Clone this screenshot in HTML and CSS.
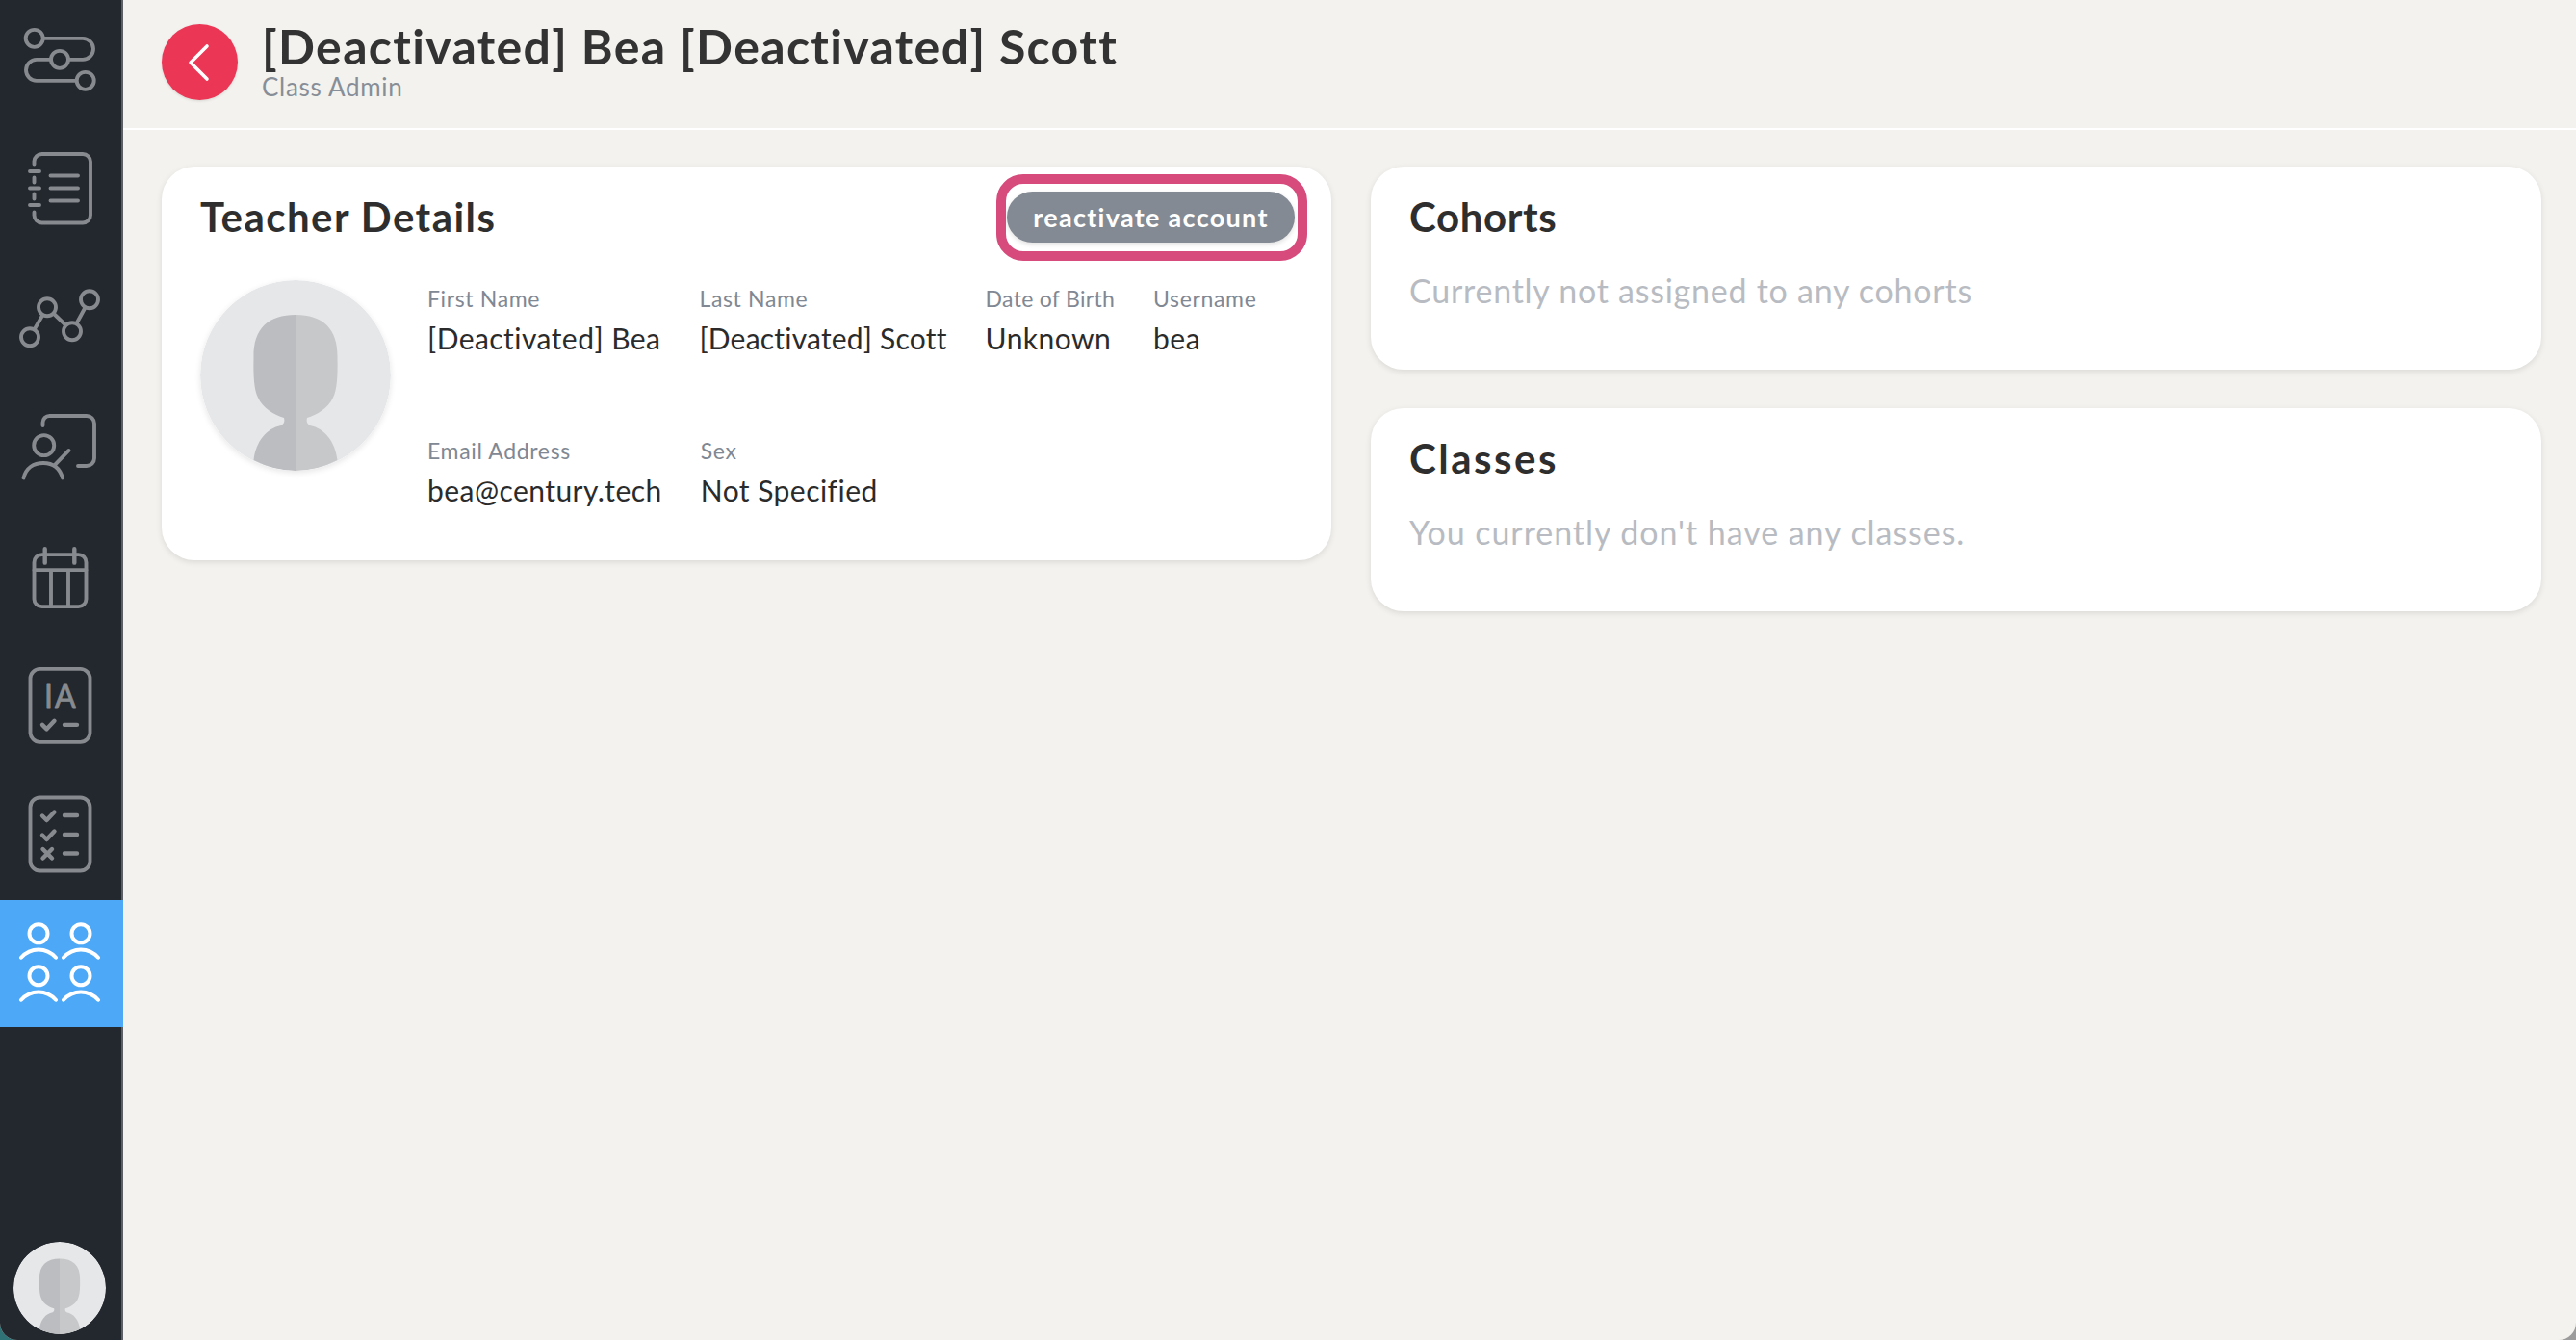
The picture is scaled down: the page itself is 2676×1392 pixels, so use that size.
FILE: index.html
```html
<!DOCTYPE html>
<html lang="en">
<head>
<meta charset="utf-8">
<title>Teacher Details</title>
<link rel="stylesheet" href="styles.css">
</head>
<body>
<svg class="defs" width="0" height="0" aria-hidden="true">
  <symbol id="silhouette" viewBox="0 0 198 198">
    <circle cx="99" cy="99" r="99" fill="#e6e7e9"/>
    <path fill="#bcbdc0" d="M99 36C71 36 55 50 55.5 80C55 100 56 114 60 122C65 133 77 140 87 143C88 147 87 149 84 151C69 154 58 167 55.5 187A99 99 0 0 0 99 198Z"/>
    <path fill="#c7c8ca" d="M99 36C127 36 143 50 142.5 80C143 100 142 114 138 122C133 133 121 140 111 143C110 147 111 149 114 151C129 154 140 167 142.5 187A99 99 0 0 1 99 198Z"/>
  </symbol>
</svg>
<div class="app">
  <aside class="sidebar">
    <nav class="nav">
      <a class="nav-item">
        <svg class="nav-icon" viewBox="13 11.15 100 100"><path d="M45 40H86A11 11 0 0 1 86 62H71M53 62H38A11 11 0 0 0 38 84H80"/><circle cx="35.7" cy="40" r="9"/><circle cx="62" cy="62" r="9"/><circle cx="88.7" cy="84" r="9"/></svg>
      </a>
      <a class="nav-item">
        <svg class="nav-icon" viewBox="13 145.45 100 100"><path d="M35.5 171V168A8 8 0 0 1 43.5 160.5H86A8 8 0 0 1 94 168.5V224A8 8 0 0 1 86 232H43.5A8 8 0 0 1 35.5 224V221M31 178.5H41M31 196H41M31 213.5H41M35.5 185V190M35.5 202V207M52.5 183H81M52.5 196H81M52.5 209H81"/></svg>
      </a>
      <a class="nav-item">
        <svg class="nav-icon" viewBox="13 279.75 100 100"><path d="M31 350L49 319L75 344L93 311"/><circle cx="31" cy="350" r="9"/><circle cx="49" cy="319" r="9"/><circle cx="75" cy="344" r="9"/><circle cx="93" cy="311" r="9"/></svg>
      </a>
      <a class="nav-item">
        <svg class="nav-icon" viewBox="13 414.05 100 100"><path d="M44.5 442V439A7 7 0 0 1 51.5 432H90A8 8 0 0 1 98 440V476A8 8 0 0 1 90 484H81M24.500 496.500C27 486 35 481 45 481C55 481 62 486 65 496.500M57 483L71.500 468"/><circle cx="45.700" cy="462.700" r="10.500"/></svg>
      </a>
      <a class="nav-item">
        <svg class="nav-icon" viewBox="13 548.35 100 100"><rect x="35.500" y="576.500" width="54" height="54" rx="8"/><path d="M35.500 592.500H89.500M53 592.500V630.500M71 592.500V630.500"/><path class="bold" d="M46.700 570.500V585M77.300 570.500V585"/></svg>
      </a>
      <a class="nav-item">
        <svg class="nav-icon" viewBox="13 682.65 100 100"><rect x="31.500" y="694.500" width="62" height="76" rx="10"/><path class="bold" d="M44 752.500L48.500 757L56.500 748.500M67 752.500H80"/><text class="icon-text" x="46" y="735">I</text><text class="icon-text" x="57" y="735">A</text></svg>
      </a>
      <a class="nav-item">
        <svg class="nav-icon" viewBox="13 816.95 100 100"><rect x="31.500" y="828.500" width="62" height="76" rx="10"/><path class="bold" d="M44 847.500L48.500 852L56.500 843.500M67 847H80M44 867.500L48.500 872L56.500 863.500M67 867H80M44.500 882L54 891.500M54 882L44.500 891.500M67 886.500H80"/></svg>
      </a>
      <a class="nav-item active">
        <svg class="nav-icon" viewBox="13 951.25 100 100"><circle cx="40" cy="970" r="9.500"/><circle cx="84" cy="970" r="9.500"/><circle cx="40" cy="1014" r="9.500"/><circle cx="84" cy="1014" r="9.500"/><path d="M22 995C32 984 48 984 58 995M66 995C76 984 92 984 102 995M22 1039C32 1028 48 1028 58 1039M66 1039C76 1028 92 1028 102 1039"/></svg>
      </a>
    </nav>
    <svg class="user-avatar"><use href="#silhouette"/></svg>
  </aside>
  <main class="main">
    <header class="page-header">
      <button class="back" type="button" aria-label="Back">
        <svg class="back-icon" viewBox="0 0 79 79"><path d="M47 23L30 40L47 57"/></svg>
      </button>
      <div class="heading">
        <h1 class="title">[Deactivated] Bea [Deactivated] Scott</h1>
        <div class="subtitle">Class Admin</div>
      </div>
    </header>
    <div class="content">
      <section class="card">
        <div class="card-head">
          <h2 class="card-title">Teacher Details</h2>
          <button class="reactivate" type="button">reactivate account</button>
        </div>
        <div class="details">
          <svg class="avatar"><use href="#silhouette"/></svg>
          <div class="fields">
            <div class="field-row">
              <div class="field"><div class="label">First Name</div><div class="value">[Deactivated] Bea</div></div>
              <div class="field"><div class="label">Last Name</div><div class="value value-tight">[Deactivated] Scott</div></div>
              <div class="field"><div class="label label-tight">Date of Birth</div><div class="value">Unknown</div></div>
              <div class="field"><div class="label">Username</div><div class="value">bea</div></div>
            </div>
            <div class="field-row">
              <div class="field"><div class="label">Email Address</div><div class="value">bea@century.tech</div></div>
              <div class="field"><div class="label">Sex</div><div class="value">Not Specified</div></div>
            </div>
          </div>
        </div>
      </section>
      <div class="side-column">
        <section class="card card-short">
          <div class="card-head"><h2 class="card-title title-cohorts">Cohorts</h2></div>
          <p class="empty empty-cohorts">Currently not assigned to any cohorts</p>
        </section>
        <section class="card card-short">
          <div class="card-head"><h2 class="card-title title-classes">Classes</h2></div>
          <p class="empty empty-classes">You currently don't have any classes.</p>
        </section>
      </div>
    </div>
  </main>
</div>
</body>
</html>
```
FILE: styles.css
```css
* { box-sizing: border-box; }
html, body { height: 100%; }
body {
  margin: 0;
  overflow: hidden;
  background: linear-gradient(90deg, #2f7377 50%, #9c9c9c 50%);
  font-family: Lato, "Liberation Sans", sans-serif;
  color: #2b2b2b;
}
.defs { position: absolute; }
.app {
  display: flex;
  height: 1392px;
  background: #f3f2ee;
  border-radius: 0 0 18px 18px;
  overflow: hidden;
}
.sidebar {
  width: 128px;
  flex: none;
  display: flex;
  flex-direction: column;
  justify-content: space-between;
  background: #23272e;
  border-right: 2px solid #5c5f63;
}
.nav { display: flex; flex-direction: column; margin-top: -6px; }
.nav-item {
  height: 134.3px;
  display: flex;
  align-items: center;
  justify-content: center;
}
.nav-item.active {
  height: 132.3px;
  margin-top: 1px;
  margin-right: -2px;
  padding-right: 2px;
  background: #4da8f7;
}
.nav-icon {
  width: 100px;
  height: 100px;
  fill: #23272e;
  stroke: #878b8f;
  stroke-width: 3.9;
  stroke-linecap: round;
  stroke-linejoin: round;
}
.nav-icon path { fill: none; }
.nav-icon .bold { stroke-width: 4.4; }
.icon-text { font: 400 32px Lato, sans-serif; fill: #878b8f; stroke: #878b8f; stroke-width: .8; }
.active .nav-icon { fill: none; stroke: #fff; stroke-width: 4; }
.user-avatar { width: 96px; height: 96px; margin: 0 0 6px 14px; border-radius: 50%; }
.main { flex: 1; min-width: 0; display: flex; flex-direction: column; }
.page-header {
  height: 135px;
  padding: 0 0 4px 40px;
  display: flex;
  align-items: center;
  gap: 25px;
  border-bottom: 2px solid #fff;
}
.back {
  width: 79px;
  height: 79px;
  flex: none;
  padding: 0;
  border: 0;
  border-radius: 50%;
  background: #ec3656;
  box-shadow: 0 1px 3px rgba(0,0,0,.12);
}
.back-icon { display: block; width: 79px; height: 79px; fill: none; stroke: #fff; stroke-width: 3.6; stroke-linecap: round; stroke-linejoin: round; }
.heading { align-self: flex-start; padding-top: 20px; display: flex; flex-direction: column; }
.title { margin: 0; font-size: 50px; line-height: 56px; font-weight: 700; letter-spacing: 1.35px; color: #333; }
.subtitle { font-size: 26px; line-height: 29px; letter-spacing: .7px; color: #878e97; }
.content {
  display: grid;
  grid-template-columns: 1215px 1216px;
  column-gap: 41px;
  align-items: start;
  padding: 38px 36px 0 40px;
}
.card {
  padding: 26px 38px 53px 40px;
  background: #fff;
  border-radius: 34px;
  box-shadow: 0 2px 6px rgba(0,0,0,.1);
}
.card-short { padding-bottom: 49px; }
.card-head { height: 53px; display: flex; align-items: center; justify-content: space-between; }
.card-title { margin: 0; font-size: 42px; line-height: 53px; font-weight: 700; letter-spacing: 1.45px; color: #2e2e2e; }
.title-cohorts { letter-spacing: .6px; }
.title-classes { letter-spacing: 2.5px; }
.reactivate {
  position: relative;
  width: 299px;
  height: 53px;
  padding: 0;
  border: 0;
  border-radius: 27px;
  background: #838a93;
  color: #fff;
  font: 700 27px Lato, sans-serif;
  letter-spacing: 1.3px;
  box-shadow: 0 2px 5px rgba(0,0,0,.12);
}
.reactivate::after {
  content: "";
  position: absolute;
  top: -18px;
  bottom: -19px;
  left: -11px;
  right: -13px;
  border: 10px solid #d64a7c;
  border-radius: 28px;
}
.details { display: flex; gap: 38px; margin-top: 39px; align-items: flex-start; }
.avatar { width: 198px; height: 198px; flex: none; border-radius: 50%; box-shadow: 0 2px 6px rgba(0,0,0,.1); }
.fields { display: flex; flex-direction: column; gap: 83px; padding-top: 5px; }
.field-row { display: flex; gap: 40px; }
.label { font-size: 23px; line-height: 28px; letter-spacing: .65px; color: #7f8893; }
.label-tight { letter-spacing: .3px; }
.value { margin-top: 7px; font-size: 30px; line-height: 40px; letter-spacing: .45px; color: #2b2b2b; white-space: nowrap; }
.value-tight { letter-spacing: .2px; }
.side-column { display: flex; flex-direction: column; gap: 40px; }
.empty { margin: 28px 0 11px; font-size: 34px; line-height: 44px; color: #b8bcc2; }
.empty-cohorts { letter-spacing: .75px; }
.empty-classes { letter-spacing: .95px; }
```
